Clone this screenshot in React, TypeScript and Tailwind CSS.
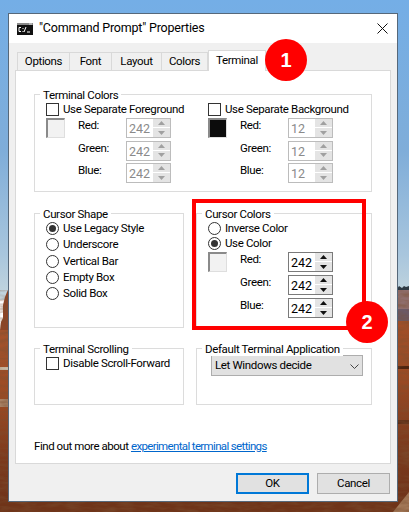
import React from "react";

function Background() {
  return (
    <svg className="absolute inset-0" width="409" height="512" viewBox="0 0 409 512">
      <defs>
        <linearGradient id="sky" x1="0" y1="0" x2="0" y2="1">
          <stop offset="0" stopColor="#74aee6" />
          <stop offset="0.5" stopColor="#7fadd9" />
          <stop offset="0.85" stopColor="#a9c6dd" />
          <stop offset="1" stopColor="#c4d6de" />
        </linearGradient>
        <linearGradient id="rock" x1="0" y1="0" x2="0" y2="1">
          <stop offset="0" stopColor="#a5532c" />
          <stop offset="0.4" stopColor="#9a4a24" />
          <stop offset="0.7" stopColor="#7c3a1d" />
          <stop offset="1" stopColor="#6d3219" />
        </linearGradient>
        <filter id="grain" x="0" y="0" width="100%" height="100%">
          <feTurbulence type="fractalNoise" baseFrequency="0.06 0.25" numOctaves="3" seed="4" />
          <feColorMatrix values="0 0 0 0 0.2 0 0 0 0 0.08 0 0 0 0 0.03 0 0 0 1.6 -0.6" />
        </filter>
      </defs>
      <rect width="409" height="300" fill="url(#sky)" />
      <path d="M0 330 L1 322 L3 318 L3 305 L5 297 L7 292 L8 290 L9 290 L9 512 L0 512 Z" fill="#8c4527" />
      <rect x="0" y="330" width="9" height="182" fill="url(#rock)" />
      <rect x="0" y="367" width="9" height="3" fill="#c9b9a4" />
      <rect x="0" y="399" width="9" height="8" fill="#b8a58e" opacity="0.7" />
      <rect x="397" y="289" width="12" height="223" fill="url(#rock)" />
      <rect x="397" y="289" width="12" height="20" fill="#8f6e6c" />
      <rect x="397" y="309" width="12" height="12" fill="#6c5a66" />
      <path d="M397 289 L399 286 L402 288 L404 286 L406 287 L409 286 L409 290 L397 290 Z" fill="#2f3a44" />
      <rect x="397" y="366" width="12" height="3" fill="#4f2511" />
      <rect x="397" y="420" width="12" height="4" fill="#5b2a14" />
      <rect y="501" width="409" height="11" fill="#6f3419" />
      <path d="M393 512 L409 492 L409 512 Z" fill="#a37858" />
      <rect y="290" width="409" height="222" filter="url(#grain)" opacity="0.75" />
    </svg>
  );
}

function Group({ title, className, children }: { title: string; className: string; children?: React.ReactNode }) {
  return (
    <div className={"relative border border-[#dcdcdc] " + className}>
      <span className="absolute -top-[7px] left-[5px] bg-white px-[3px] leading-[14px] whitespace-nowrap">{title}</span>
      {children}
    </div>
  );
}

function Check({ label }: { label: string }) {
  return (
    <div className="flex h-[13px] items-center gap-[4px] leading-[13px] whitespace-nowrap">
      <span className="h-[13px] w-[13px] shrink-0 border border-[#333333] bg-white" />
      {label}
    </div>
  );
}

function Radio({ label, on }: { label: string; on?: boolean }) {
  return (
    <div className="flex h-[13px] items-center gap-[4px] leading-[13px] whitespace-nowrap">
      <span className="flex h-[13px] w-[13px] shrink-0 items-center justify-center rounded-full border border-[#333333] bg-white">
        {on && <span className="h-[7px] w-[7px] rounded-full bg-[#333333]" />}
      </span>
      {label}
    </div>
  );
}

function Arrow({ up, color }: { up?: boolean; color: string }) {
  return (
    <span className="flex h-[9px] w-full items-center justify-center">
      <svg width="7" height="4" viewBox="0 0 7 4">
        <path d={up ? "M3.5 0 L7 4 L0 4 Z" : "M0 0 L7 0 L3.5 4 Z"} fill={color} />
      </svg>
    </span>
  );
}

function Spinner({ value, disabled }: { value: number; disabled?: boolean }) {
  return (
    <div
      className={
        disabled
          ? "flex h-[20px] w-[45px] border border-[#bcbcbc] bg-white text-[#8a8a8a]"
          : "flex h-[20px] w-[45px] border border-[#7a7a7a] bg-white text-black"
      }
    >
      <span className="flex-1 pl-[2px] text-[12.5px] tracking-normal leading-[19px]">{value}</span>
      <span className="flex w-[17px] flex-col divide-y divide-white bg-[#e4e4e4]">
        <Arrow up color={disabled ? "#a0a0a0" : "#111111"} />
        <Arrow color={disabled ? "#a0a0a0" : "#111111"} />
      </span>
    </div>
  );
}

function ColorBlock({ color, value, disabled, rowGap }: { color: string; value: number; disabled?: boolean; rowGap: string }) {
  return (
    <div className="flex">
      <div className="h-[20px] w-[19px] border border-t-2 border-l-2 border-t-[#8a8a8a] border-l-[#8a8a8a] border-r-[#dedede] border-b-[#dedede]" style={{ backgroundColor: color }} />
      <div className={"ml-[13px] flex flex-col " + rowGap}>
        {["Red:", "Green:", "Blue:"].map((l) => (
          <div key={l} className="flex h-[20px]">
            <span className="w-[48px] leading-[14px]">{l}</span>
            <Spinner value={value} disabled={disabled} />
          </div>
        ))}
      </div>
    </div>
  );
}

function Tab({ label, w, active }: { label: string; w: string; active?: boolean }) {
  return active ? (
    <div className={"relative z-10 -mb-px flex h-[21px] items-center justify-center border border-b-0 border-[#d9d9d9] bg-white pb-[1px] " + w}>{label}</div>
  ) : (
    <div className={"flex h-[18px] items-center justify-center border border-b-0 border-l-0 border-[#d9d9d9] pt-[1px] first:border-l " + w}>{label}</div>
  );
}

function Badge({ n, className }: { n: number; className: string }) {
  return (
    <div className={"absolute z-20 flex h-[42px] w-[42px] items-center justify-center rounded-full bg-[#ff0000] font-['Liberation_Sans',sans-serif] text-[20px] font-bold tracking-normal text-white " + className}>
      {n}
    </div>
  );
}

export default function App() {
  return (
    <div className="relative h-[512px] w-[409px] overflow-hidden font-['Roboto',sans-serif] text-[11.5px] tracking-[-0.35px] text-black">
      <Background />
      <div className="absolute top-[13px] left-[8px] flex h-[489px] w-[390px] flex-col border border-[#56687a] bg-[#f0f0f0]">
        <div className="flex h-[29px] shrink-0 items-center bg-white pl-[8px] pr-[9px] text-[12.5px] tracking-[-0.2px]">
          <svg width="16" height="12" viewBox="0 0 16 12" className="shrink-0">
            <rect width="16" height="12" fill="#111" />
            <rect x="0" y="0" width="16" height="2" fill="#8a8a8a" />
            <rect x="12" y="0.5" width="3" height="1" fill="#ddd" />
            <path d="M2 4.5h2M2 8.5h2M2 4.5v4M6 5v1M6 8v1M9 4l-2 5M10 9h3" stroke="#fff" strokeWidth="1" fill="none" />
          </svg>
          <span className="ml-[6px] flex-1 whitespace-nowrap">"Command Prompt" Properties</span>
          <svg width="11" height="11" viewBox="0 0 11 11">
            <path d="M0.5 0.5L10.5 10.5M10.5 0.5L0.5 10.5" stroke="#111" strokeWidth="1" />
          </svg>
        </div>
        <div className="ml-[8px] mt-[6px] flex h-[21px] items-end">
          <Tab label="Options" w="w-[53px]" />
          <Tab label="Font" w="w-[42px]" />
          <Tab label="Layout" w="w-[50px]" />
          <Tab label="Colors" w="w-[46px]" />
          <Tab label="Terminal" w="w-[58px]" active />
        </div>
        <div className="mx-[6px] flex h-[394px] flex-col border border-[#d9d9d9] bg-white pl-[18px] pt-[23px]">
          <Group title="Terminal Colors" className="h-[98px] w-[338px] pl-[11px] pt-[8px]">
            <div className="grid grid-cols-[162px_1fr]">
              <div className="flex flex-col gap-[2px]">
                <Check label="Use Separate Foreground" />
                <ColorBlock color="#f2f2f2" value={242} disabled rowGap="gap-[2.5px]" />
              </div>
              <div className="flex flex-col gap-[2px]">
                <Check label="Use Separate Background" />
                <ColorBlock color="#0c0c0c" value={12} disabled rowGap="gap-[2.5px]" />
              </div>
            </div>
          </Group>
          <div className="mt-[21px] flex w-[338px] justify-between">
            <Group title="Cursor Shape" className="h-[115px] w-[150px] pl-[11px] pt-[8px]">
              <div className="flex flex-col gap-[3.3px]">
                <Radio label="Use Legacy Style" on />
                <Radio label="Underscore" />
                <Radio label="Vertical Bar" />
                <Radio label="Empty Box" />
                <Radio label="Solid Box" />
              </div>
            </Group>
            <Group title="Cursor Colors" className="h-[115px] w-[176px] pl-[11px] pt-[8px]">
              <div className="flex flex-col gap-[2px]">
                <Radio label="Inverse Color" />
                <Radio label="Use Color" on />
              </div>
              <div className="mt-[2px]">
                <ColorBlock color="#f2f2f2" value={242} rowGap="gap-[3px]" />
              </div>
            </Group>
          </div>
          <div className="mt-[20px] flex w-[338px] justify-between">
            <Group title="Terminal Scrolling" className="h-[57px] w-[150px] pl-[11px] pt-[8px]">
              <Check label="Disable Scroll-Forward" />
            </Group>
            <Group title="Default Terminal Application" className="h-[57px] w-[176px] pl-[14px] pt-[6px]">
              <div className="flex h-[21px] w-[152px] items-center justify-between border border-[#adadad] bg-[#e1e1e1] pl-[3px] pr-[3px] pt-[1px]">
                Let Windows decide
                <svg width="9" height="5" viewBox="0 0 9 5">
                  <path d="M0.5 0.5L4.5 4.5L8.5 0.5" stroke="#444" strokeWidth="1" fill="none" />
                </svg>
              </div>
            </Group>
          </div>
          <div className="mt-[34px] leading-[14px] tracking-[-0.45px]">
            Find out more about <span className="text-[#0066cc] underline tracking-[-0.65px]">experimental terminal settings</span>
          </div>
        </div>
        <div className="mr-[7px] mt-[9px] flex justify-end gap-[8px]">
          <div className="flex h-[21px] w-[73px] items-center justify-center border-2 border-[#0078d7] bg-[#e1e1e1]">OK</div>
          <div className="flex h-[21px] w-[73px] items-center justify-center border border-[#adadad] bg-[#e1e1e1]">Cancel</div>
        </div>
      </div>
      <div className="absolute top-[199px] left-[192px] h-[131px] w-[174px] border-[4px] border-[#ff0000]" />
      <Badge n={1} className="top-[39px] left-[265px]" />
      <Badge n={2} className="top-[301px] left-[346px]" />
    </div>
  );
}
